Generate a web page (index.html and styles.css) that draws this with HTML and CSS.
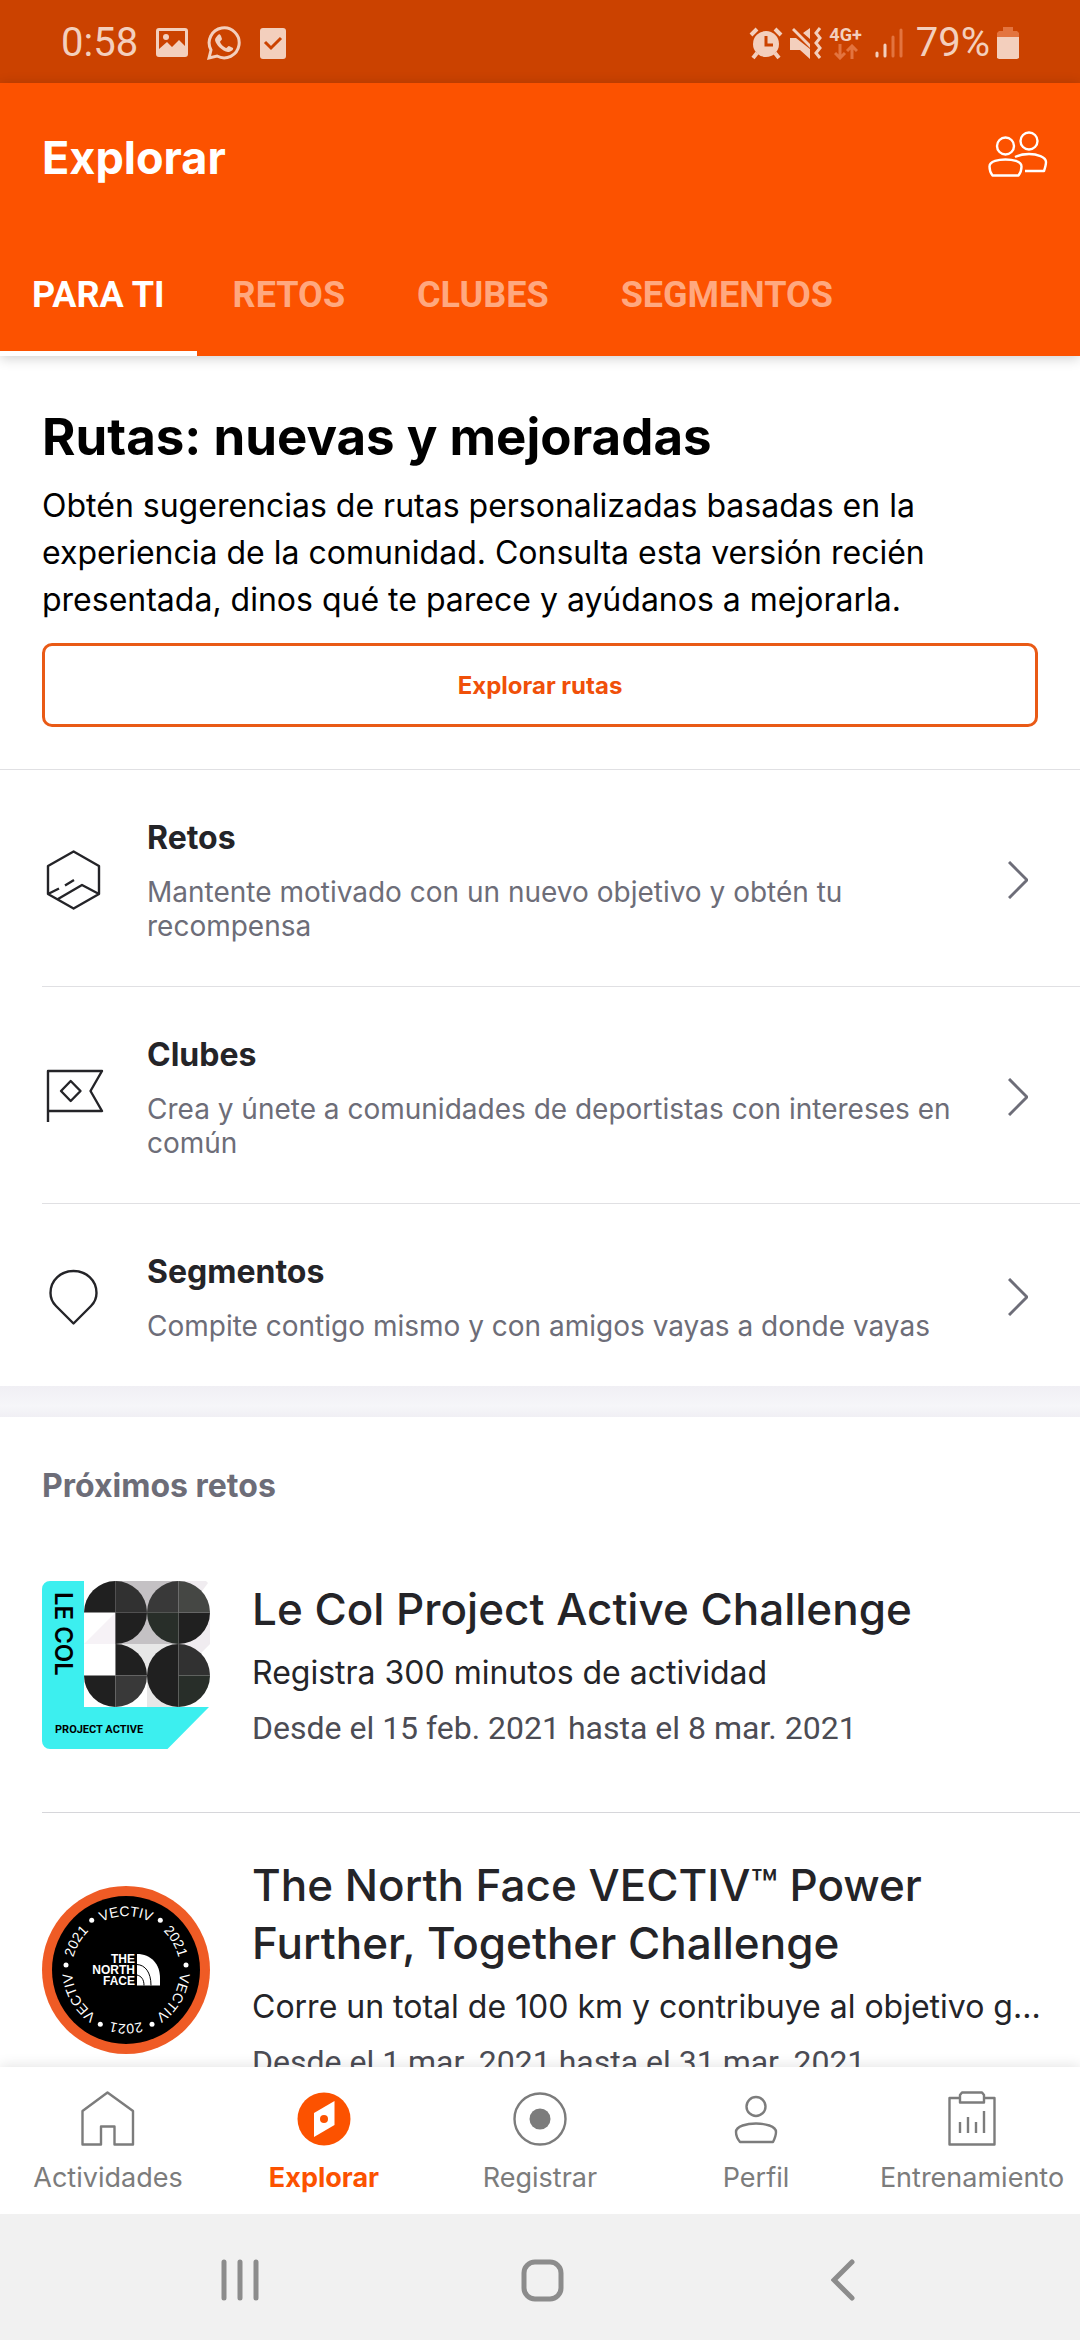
FILE: index.html
```html
<!DOCTYPE html>
<html lang="es">
<head>
<meta charset="utf-8">
<meta name="viewport" content="width=device-width, initial-scale=1">
<title>Explorar</title>
<link rel="stylesheet" href="styles.css">
</head>
<body>
<div class="status">
  <div class="status-left">
    <span class="clock">0:58</span>
    <svg width="32" height="34" viewBox="0 0 32 34"><path fill="currentColor" fill-rule="evenodd" d="M3 2H29a3 3 0 0 1 3 3V28a3 3 0 0 1-3 3H3a3 3 0 0 1-3-3V5a3 3 0 0 1 3-3ZM3 5V23L11 16L16 21L23 14L29 20V5Z"/><circle cx="10" cy="11" r="3" fill="currentColor"/></svg>
    <svg width="36" height="36" viewBox="0 0 36 36"><path fill="none" stroke="currentColor" stroke-width="3" d="M3 33L5 25A15 15 0 1 1 11 31Z"/><path fill="currentColor" d="M12 10C13 9 14 9 15 11L16 14C16 15 14 16 14 17C15 20 18 22 20 23C21 23 22 21 23 21L27 23C28 25 24 27 22 27C16 26 10 20 9 15C9 13 11 11 12 10Z"/></svg>
    <svg class="status-task" width="26" height="34" viewBox="0 0 26 34"><rect y="2" width="26" height="31" rx="3" fill="currentColor"/><path fill="none" stroke="#cb4200" stroke-width="3" d="M5 16L11 22L21 12"/></svg>
  </div>
  <div class="status-right">
    <svg width="34" height="34" viewBox="0 0 34 34"><circle cx="17" cy="18" r="13" fill="currentColor"/><path fill="none" stroke="currentColor" stroke-width="4" d="M2 9L8 3M32 9L26 3M8 27L4 32M26 27L30 32"/><path fill="none" stroke="#cb4200" stroke-width="3" d="M17 10V19H24"/></svg>
    <svg class="status-mute" width="32" height="34" viewBox="0 0 32 34"><path fill="currentColor" d="M0 12H6L20 23V33L10 24H0ZM2 4L4 2L20 18V22ZM13 7L20 2V13Z"/><path fill="none" stroke="currentColor" stroke-width="3" d="M30 2L26 7L30 12L26 17L30 22L26 27L30 32"/></svg>
    <span class="network">4G+<svg width="24" height="16" viewBox="0 0 24 16"><path fill="none" stroke="#e3743f" stroke-width="3" d="M6 0V13M1 9L6 14L11 9M18 15V2M13 7L18 2L23 7"/></svg></span>
    <svg class="status-signal" width="28" height="32" viewBox="0 0 28 32"><path fill="none" stroke="currentColor" stroke-width="3" stroke-linecap="round" d="M2 26V29M10 18V29"/><path fill="none" stroke="#e3743f" stroke-width="3" stroke-linecap="round" d="M18 10V29M26 3V29"/></svg>
    <span class="percent">79%</span>
    <svg width="22" height="34" viewBox="0 0 22 34"><path fill="#e3743f" d="M6 1H16V5H20L22 7V12H0V7L2 5H6Z"/><path fill="currentColor" d="M0 11H22V32L20 33H2L0 32Z"/></svg>
  </div>
</div>

<header class="header">
  <div class="toolbar">
    <h1 class="title">Explorar</h1>
    <button class="icon-button" type="button" aria-label="Amigos">
      <svg width="60" height="54" viewBox="0 0 60 54" fill="none" stroke="#fff" stroke-width="2.4" stroke-linejoin="round"><circle cx="17.5" cy="15" r="8.5"/><circle cx="41" cy="10" r="8.5"/><path d="M4.500 44.500C2.500 42 1.500 38 1.500 35.500C1.500 30 11 28.500 17.500 28.500C24 28.500 33.500 30 33.500 35.500C33.500 38 32.500 42 30.500 44.500Z"/><path d="M27 26C31 24 36 23 41 23C49 23 58 26 58 31C58 34 57 37 56 40L37 40"/></svg>
    </button>
  </div>
  <nav class="tabs">
    <a class="tab tab-active" href="#para-ti">PARA TI</a>
    <a class="tab" href="#retos">RETOS</a>
    <a class="tab" href="#clubes">CLUBES</a>
    <a class="tab" href="#segmentos">SEGMENTOS</a>
  </nav>
</header>

<main class="content">
  <section class="promo">
    <h2 class="promo-title">Rutas: nuevas y mejoradas</h2>
    <p class="promo-text">Obtén sugerencias de rutas personalizadas basadas en la experiencia de la comunidad. Consulta esta versión recién presentada, dinos qué te parece y ayúdanos a mejorarla.</p>
    <button class="outline-button" type="button">Explorar rutas</button>
  </section>

  <section class="links">
    <a class="link-row" href="#retos">
      <svg class="row-icon" width="64" height="64" viewBox="0 0 64 64"><path d="M31.600 3.500L57 18V46L31.600 60.500L6 46V18ZM16 51L40 37L57 46M6 46L17 40.500M23 37.500L32 32"/></svg>
      <span class="row-text"><strong class="row-title">Retos</strong><span class="row-desc">Mantente motivado con un nuevo objetivo y obtén tu recompensa</span></span>
      <svg class="chevron" width="20" height="38" viewBox="0 0 20 38"><path d="M1 1L19 19L1 37"/></svg>
    </a>
    <a class="link-row" href="#clubes">
      <svg class="row-icon" width="64" height="64" viewBox="0 0 64 64"><path d="M6 57V6H60L48.500 26L60 46H6M28.700 16L38.500 26L28.700 36L19 26Z"/></svg>
      <span class="row-text"><strong class="row-title">Clubes</strong><span class="row-desc">Crea y únete a comunidades de deportistas con intereses en común</span></span>
      <svg class="chevron" width="20" height="38" viewBox="0 0 20 38"><path d="M1 1L19 19L1 37"/></svg>
    </a>
    <a class="link-row" href="#segmentos">
      <svg class="row-icon" width="64" height="64" viewBox="0 0 64 64"><path d="M31.500 58.500L14 41C10 37 8.500 33 8.500 28C8.500 15 19 6 31.500 6C44 6 54.500 15 54.500 28C54.500 33 53 37 49 41Z"/></svg>
      <span class="row-text"><strong class="row-title">Segmentos</strong><span class="row-desc">Compite contigo mismo y con amigos vayas a donde vayas</span></span>
      <svg class="chevron" width="20" height="38" viewBox="0 0 20 38"><path d="M1 1L19 19L1 37"/></svg>
    </a>
  </section>

  <section class="challenges">
    <h2 class="section-title">Próximos retos</h2>
    <article class="challenge">
      <svg class="badge" width="168" height="168" viewBox="0 0 168 168">
        <path fill="#3cefef" d="M8 0H42V126H167L125.500 168H8A8 8 0 0 1 0 160V8A8 8 0 0 1 8 0Z"/>
        <path fill="#f0ecf0" d="M136 0H164L166 2L160 10L168 31V63L157 74L136 63Z"/>
        <path fill="#c4c1c4" d="M73 0H136V63H73Z"/>
        <path fill="#e7e7e7" d="M73 63H136V126H105V94H73Z"/>
        <path fill="#f6f2f6" d="M42 63L73 32V63Z"/>
        <g fill="#202020"><path d="M42 31.500A31.500 31.500 0 0 1 73.500 0V31.500Z"/><path d="M73.500 31.500H105A31.500 31.500 0 0 1 73.500 63Z"/><path d="M136.500 31.500H168A31.500 31.500 0 0 1 136.500 63Z"/><path d="M73.500 63A31.500 31.500 0 0 1 105 94.500H73.500Z"/><path d="M42 94.500H73.500V126A31.500 31.500 0 0 1 42 94.500Z"/><path d="M136.500 63V126A31.500 31.500 0 0 1 136.500 63Z"/></g>
        <g fill="#313131"><path d="M73.500 0A31.500 31.500 0 0 1 105 31.500H73.500Z"/><path d="M136.500 63A31.500 31.500 0 0 1 168 94.500H136.500Z"/></g>
        <g fill="#393939"><path d="M136.500 0V31.500H105A31.500 31.500 0 0 1 136.500 0Z"/><path d="M73.500 94.500H105A31.500 31.500 0 0 1 73.500 126Z"/></g>
        <path fill="#454744" d="M136.500 0A31.500 31.500 0 0 1 168 31.500H136.500Z"/>
        <g fill="#282e29"><path d="M105 31.500H136.500V63A31.500 31.500 0 0 1 105 31.500Z"/><path d="M136.500 94.500H168A31.500 31.500 0 0 1 136.500 126Z"/></g>
        <text class="badge-brand" transform="translate(13 11) rotate(90)">LE COL</text>
        <text class="badge-project" x="13" y="152">PROJECT ACTIVE</text>
      </svg>
      <div class="challenge-text">
        <h3 class="challenge-title">Le Col Project Active Challenge</h3>
        <p class="challenge-goal">Registra 300 minutos de actividad</p>
        <p class="challenge-date">Desde el 15 feb. 2021 hasta el 8 mar. 2021</p>
      </div>
    </article>
    <article class="challenge">
      <svg class="badge" width="168" height="168" viewBox="0 0 168 168">
        <defs><path id="ring" d="M30 84A54 54 0 0 1 138 84"/></defs>
        <circle cx="84" cy="84" r="84" fill="#ef5b25"/><circle cx="84" cy="84" r="74"/>
        <g class="ring-text">
          <text><textPath href="#ring" startOffset="50%">VECTIV</textPath></text>
          <text transform="rotate(60 84 84)"><textPath href="#ring" startOffset="50%">2021</textPath></text>
          <text transform="rotate(120 84 84)"><textPath href="#ring" startOffset="50%">VECTIV</textPath></text>
          <text transform="rotate(180 84 84)"><textPath href="#ring" startOffset="50%">2021</textPath></text>
          <text transform="rotate(240 84 84)"><textPath href="#ring" startOffset="50%">VECTIV</textPath></text>
          <text transform="rotate(300 84 84)"><textPath href="#ring" startOffset="50%">2021</textPath></text>
        </g>
        <g fill="#fff"><circle cx="49.700" cy="34.300" r="2.500"/><circle cx="118.300" cy="34.300" r="2.500"/><circle cx="24" cy="79" r="2.500"/><circle cx="144" cy="79" r="2.500"/><circle cx="110" cy="138.300" r="2.500"/><circle cx="58.300" cy="138.300" r="2.500"/></g>
        <g class="face-text"><text x="93" y="77">THE</text><text x="93" y="88">NORTH</text><text x="93" y="99">FACE</text></g>
        <path fill="#fff" d="M95 68C109 68 118 78 118 92V99.500H95Z"/>
        <path fill="none" stroke="#000" d="M95 78.500C103 79 109 86 109 99.500M95 89C99 90 102 93 102 99.500"/>
      </svg>
      <div class="challenge-text">
        <h3 class="challenge-title">The North Face VECTIV™ Power Further, Together Challenge</h3>
        <p class="challenge-goal">Corre un total de 100 km y contribuye al objetivo g...</p>
        <p class="challenge-date">Desde el 1 mar. 2021 hasta el 31 mar. 2021</p>
      </div>
    </article>
  </section>
</main>

<nav class="bottom-nav">
  <a class="nav-item" href="#actividades"><svg class="nav-icon" width="56" height="56" viewBox="0 0 56 56"><path d="M27.500 2.500L53 21V54.500H34.500V36.500H21V54.500H2.500V21Z"/></svg>Actividades</a>
  <a class="nav-item nav-active" href="#explorar"><svg width="56" height="56" viewBox="0 0 56 56"><circle cx="28" cy="29" r="26.500" fill="#fc5200"/><path fill="#fff" d="M18 23L38.500 11V35L18 47Z"/><circle cx="28" cy="29" r="4" fill="#fc5200"/></svg>Explorar</a>
  <a class="nav-item" href="#registrar"><svg class="nav-icon" width="56" height="56" viewBox="0 0 56 56"><circle cx="28" cy="29" r="25.500"/><circle class="nav-dot" cx="28" cy="29" r="10.500"/></svg>Registrar</a>
  <a class="nav-item" href="#perfil"><svg class="nav-icon" width="56" height="56" viewBox="0 0 56 56"><circle cx="28" cy="16.500" r="9.500"/><path d="M12 52C9.500 49 8 45 8 42C8 36 19 33.500 28 33.500C37 33.500 48 36 48 42C48 45 46.500 49 45 52Z"/></svg>Perfil</a>
  <a class="nav-item" href="#entrenamiento"><svg class="nav-icon" width="56" height="56" viewBox="0 0 56 56"><path d="M16 8H5.500V54.500H50.500V8H40M18 2.500H38L40 5V12.500H16V5ZM16 32V43M24 27V43M32 32V43M40 21V43"/></svg>Entrenamiento</a>
</nav>

<div class="system-bar">
  <button class="system-button" type="button" aria-label="Recientes"><svg width="42" height="44" viewBox="0 0 42 44"><path d="M4 4V40M20 4V40M36 4V40"/></svg></button>
  <button class="system-button" type="button" aria-label="Inicio"><svg width="44" height="44" viewBox="0 0 44 44"><rect x="4" y="4" width="37" height="37" rx="11"/></svg></button>
  <button class="system-button" type="button" aria-label="Atrás"><svg width="24" height="44" viewBox="0 0 24 44"><path d="M21 4L3 22L21 40"/></svg></button>
</div>
</body>
</html>
```
FILE: styles.css
```css
* {
  box-sizing: border-box;
}

body {
  margin: 0;
  height: 100vh;
  display: flex;
  flex-direction: column;
  background: #fff;
  color: #242428;
  font-family: Inter, "Liberation Sans", sans-serif;
}

h1, h2, h3, p {
  margin: 0;
}

a {
  color: inherit;
  text-decoration: none;
}

button {
  padding: 0;
  border: 0;
  background: none;
  font-family: inherit;
}

svg {
  display: block;
  flex: none;
}

/* Phone status bar */
.status {
  display: flex;
  flex: none;
  justify-content: space-between;
  align-items: center;
  height: 83px;
  padding: 2px 61px 0;
  background: #cb4200;
  color: #f3cfbd;
  font-family: Roboto, sans-serif;
}

.status-left,
.status-right {
  display: flex;
  align-items: center;
}

.status-left {
  gap: 18px;
}

.status-right {
  gap: 7px;
}

.clock,
.percent {
  font-size: 40px;
  line-height: 48px;
}

.status-signal {
  margin: 0 6px;
}

.network {
  display: flex;
  flex-direction: column;
  align-items: center;
  font-size: 18px;
  font-weight: 700;
  line-height: 18px;
}

/* App header */
.header {
  position: relative;
  z-index: 1;
  flex: none;
  background: #fc5200;
  color: #fff;
  box-shadow: 0 2px 12px rgba(0, 0, 0, 0.2);
}

.toolbar {
  display: flex;
  justify-content: space-between;
  align-items: center;
  height: 150px;
  padding: 0 32px 0 42px;
}

.title {
  font-size: 45px;
  line-height: 56px;
}

.tabs {
  display: flex;
  font-family: Roboto, sans-serif;
}

.tab {
  height: 123px;
  padding: 40px 36px 0;
  border-bottom: 5px solid transparent;
  color: #ffa87f;
  font-size: 36px;
  font-weight: 700;
  line-height: 44px;
}

.tab-active {
  padding: 40px 32px 0;
  border-bottom-color: #fff;
  color: #fff;
}

/* Scrolling content */
.content {
  flex: 1;
  min-height: 0;
  overflow-y: auto;
  scrollbar-width: none;
}

.promo {
  padding: 49px 42px 42px;
  border-bottom: 1px solid #e0e0e3;
  color: #000;
}

.promo-title {
  font-size: 51px;
  line-height: 64px;
}

.promo-text {
  margin-top: 13px;
  font-size: 32px;
  line-height: 47px;
}

.outline-button {
  width: 100%;
  height: 84px;
  margin-top: 20px;
  border: 3px solid #e95a16;
  border-radius: 10px;
  color: #f05009;
  font-size: 24px;
  font-weight: 700;
}

.link-row {
  display: flex;
  align-items: center;
  margin-left: 42px;
  padding: 46px 52px 43px 0;
}

.link-row + .link-row {
  border-top: 1px solid #e0e0e3;
}

.row-icon,
.chevron {
  fill: none;
  stroke: #242428;
  stroke-width: 2.4;
  stroke-linejoin: round;
}

.chevron {
  stroke: #6d6d78;
  stroke-width: 3;
}

.row-text {
  flex: 1;
  padding: 0 40px 0 41px;
}

.row-title,
.row-desc {
  display: block;
}

.row-title {
  font-size: 32px;
  line-height: 44px;
}

.row-desc {
  margin-top: 15px;
  color: #6d6d78;
  font-size: 28px;
  line-height: 34px;
}

.challenges {
  padding-top: 31px;
  background: linear-gradient(#f0eff4, #f6f6f9 65%, #f0eff4) top / 100% 31px no-repeat;
}

.section-title {
  padding: 47px 42px 29px;
  color: #6d6d78;
  font-size: 32px;
  line-height: 44px;
}

.challenge {
  display: flex;
  align-items: center;
  gap: 42px;
  margin-left: 42px;
  padding: 43px 34px 62px 0;
}

.challenge + .challenge {
  border-top: 1px solid #d6d6da;
}

.challenge-text {
  flex: 1;
  min-width: 0;
}

.challenge-title {
  font-size: 44px;
  font-weight: 500;
  line-height: 58px;
}

.challenge-goal,
.challenge-date {
  overflow: hidden;
  margin-top: 13px;
  font-size: 32px;
  line-height: 43px;
  text-overflow: ellipsis;
  white-space: nowrap;
}

.challenge-date {
  color: #4c4c54;
  font-family: Roboto, sans-serif;
}

.badge-brand {
  font: 600 24px Inter, sans-serif;
}

.badge-project {
  font: 700 11px Roboto, sans-serif;
}

.ring-text {
  fill: #fff;
  font: 500 14px "Liberation Sans", sans-serif;
  text-anchor: middle;
}

.face-text {
  fill: #fff;
  font: 700 12px "Liberation Sans", sans-serif;
  text-anchor: end;
}

/* App navigation */
.bottom-nav {
  position: relative;
  display: grid;
  flex: none;
  grid-template-columns: repeat(5, 1fr);
  padding: 23px 0 18px;
  background: #fff;
  box-shadow: 0 -2px 12px rgba(0, 0, 0, 0.1);
}

.nav-item {
  display: flex;
  flex-direction: column;
  align-items: center;
  gap: 14px;
  color: #7c7c7c;
  font-size: 27px;
  line-height: 36px;
}

.nav-active {
  color: #fc5200;
  font-weight: 700;
}

.nav-icon {
  fill: none;
  stroke: #7c7c7c;
  stroke-width: 2.4;
  stroke-linejoin: round;
}

.nav-dot {
  fill: #7c7c7c;
  stroke: none;
}

/* Phone navigation keys */
.system-bar {
  position: relative;
  display: grid;
  flex: none;
  grid-template-columns: repeat(3, 1fr);
  height: 126px;
  padding: 6px 86px 0 90px;
  background: #f1f1f1;
}

.system-button {
  display: flex;
  justify-content: center;
  align-items: center;
}

.system-button svg {
  fill: none;
  stroke: #8c8c8c;
  stroke-width: 5;
  stroke-linecap: round;
}
```
